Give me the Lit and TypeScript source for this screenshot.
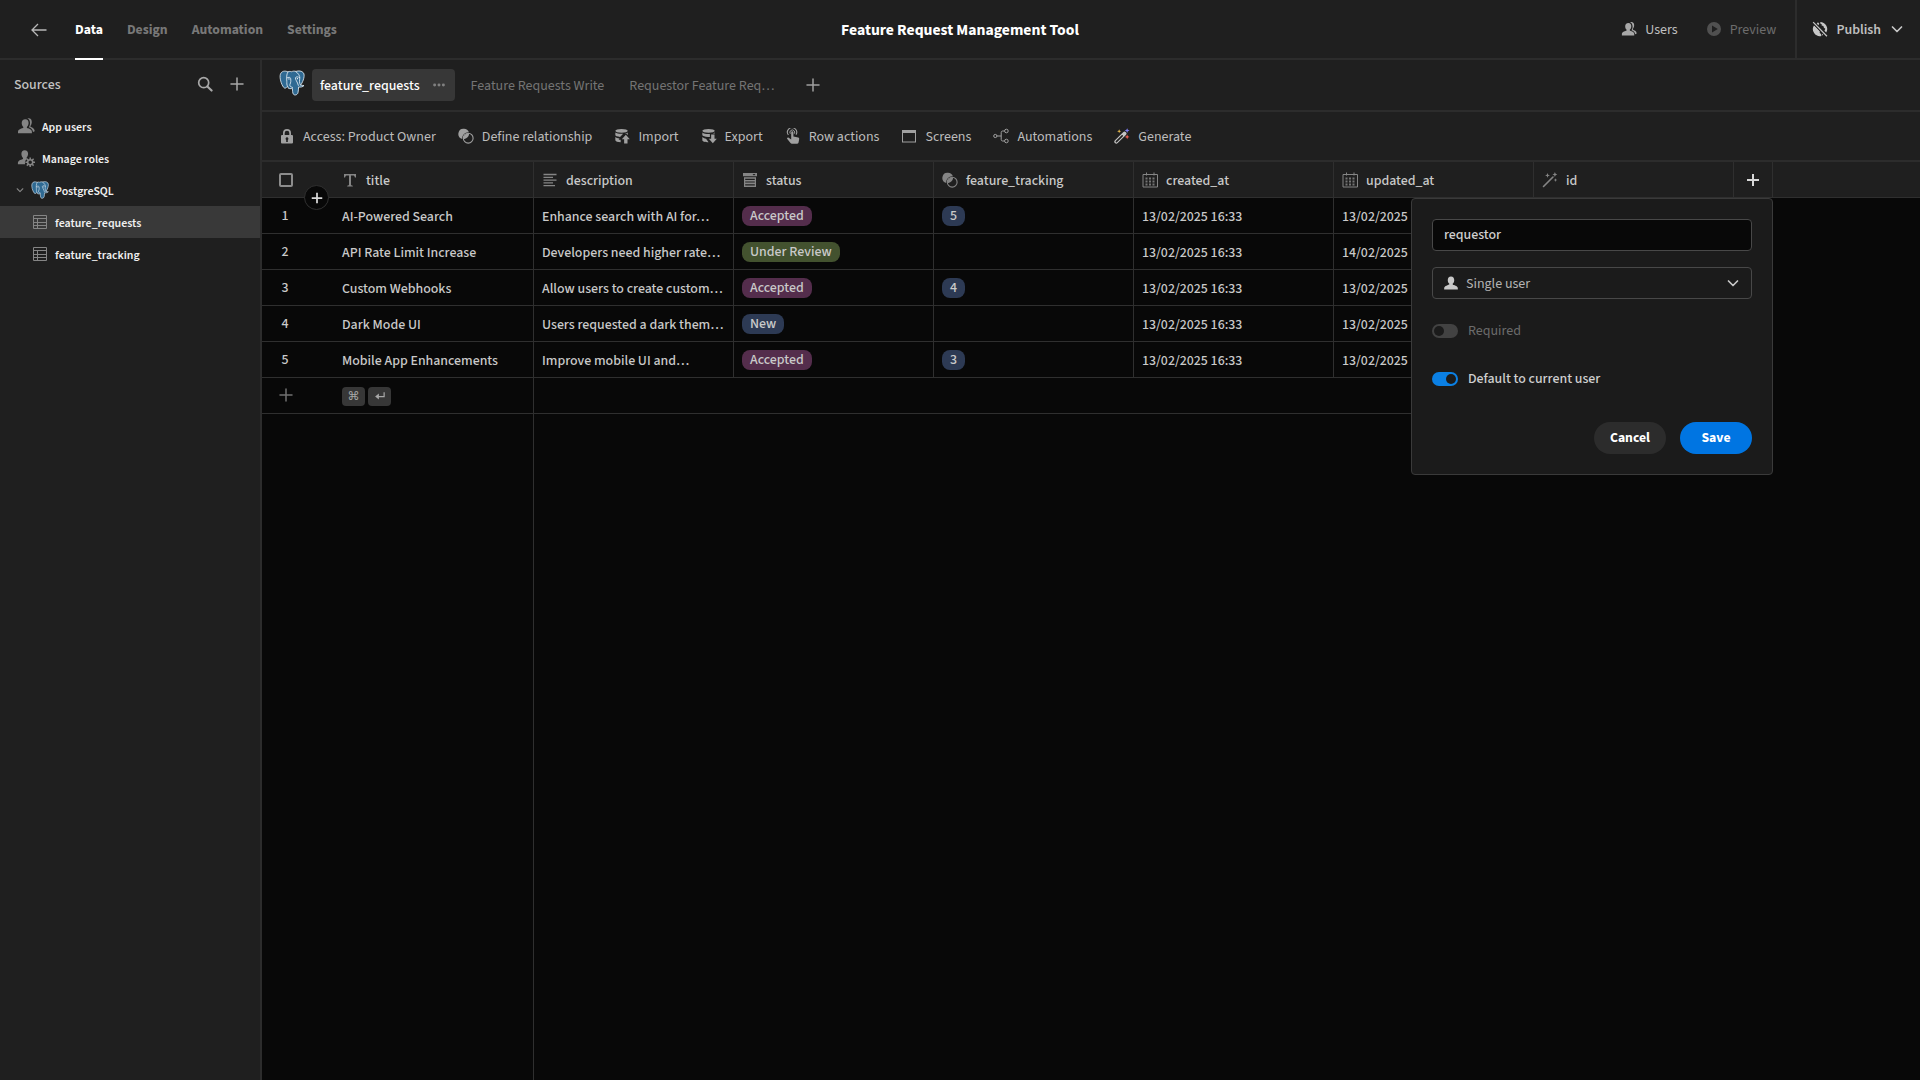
import { LitElement, html, css, svg, nothing, TemplateResult } from "lit";
import { customElement, property } from "lit/decorators.js";

type IconDef = { box: number; body: TemplateResult };

const ICONS: Record<string, IconDef> = {
  back: { box: 16, body: svg`<path d="M15.5 8H1M7 2 1 8l6 6" fill="none" stroke="currentColor" stroke-width="1.3"/>` },
  search: { box: 16, body: svg`<circle cx="6.7" cy="6.7" r="5" fill="none" stroke="currentColor" stroke-width="1.7"/><path d="m10.4 10.4 4.2 4.2" stroke="currentColor" stroke-width="2.1" stroke-linecap="round"/>` },
  plus: { box: 16, body: svg`<path d="M8 2v12M2 8h12" fill="none" stroke="currentColor" stroke-width="1.5" stroke-linecap="round"/>` },
  plusBold: { box: 16, body: svg`<path d="M8 2v12M2 8h12" fill="none" stroke="currentColor" stroke-width="2"/>` },
  chevron: { box: 16, body: svg`<path d="m3.5 6 4.5 4.500L12.500 6" fill="none" stroke="currentColor" stroke-width="1.7" stroke-linecap="round" stroke-linejoin="round"/>` },
  dots: { box: 16, body: svg`<circle cx="3" cy="8" r="1.7"/><circle cx="8" cy="8" r="1.7"/><circle cx="13" cy="8" r="1.7"/>` },
  users: {
    box: 18,
    body: svg`<path d="M8.300 2.200c2.300 0 3.300 1.600 3.300 3.800 0 1.500-.6 2.900-1.500 3.700-.3.300-.4.900.1 1.200.5.300 4.700 1 4.700 3.800v1.500H1v-1.500c0-2.800 4.500-3.500 5-3.800.5-.3.400-.9.100-1.200C5.200 8.900 4.700 7.500 4.700 6c0-2.200 1.300-3.800 3.600-3.800Z"/><path d="M10.300 1.300c3-.7 4.700 1 4.500 3.900-.1 1.600-.6 2.800-1.300 3.500-.3.400-.2.800.1 1.100.9.700 3.900 1 4.100 4.400l-1.700.7c-.3-2.900-2.700-4-4.200-4.600.8-1.300 1.300-2.700 1.200-4.500-.1-2-.9-3.700-2.700-4.500Z"/>`,
  },
  user: { box: 16, body: svg`<path d="M8 .7c2.500 0 3.700 1.700 3.700 4.100 0 1.600-.6 3-1.600 3.900-.3.300-.3.900.1 1.200.5.400 5.600 1 5.600 4v1.600H.2v-1.600c0-3 5.100-3.600 5.600-4 .4-.3.400-.9.100-1.200C4.900 7.800 4.300 6.400 4.300 4.800 4.300 2.400 5.500.7 8 .7Z"/>` },
  roles: {
    box: 18,
    body: svg`<path d="M7.700 1.200c2.300 0 3.400 1.500 3.400 3.600 0 1.500-.6 2.800-1.400 3.600-.3.300-.3.900.1 1.200l.5.200a5 5 0 0 0-2.200 5.400H.9v-1.400c0-2.700 4.400-3.400 4.900-3.900.4-.4.300-.9 0-1.200C5 7.900 4.400 6.400 4.400 4.800c0-2.100 1.100-3.600 3.300-3.600Z"/><circle cx="13.200" cy="13.200" r="2.500" fill="none" stroke="currentColor" stroke-width="1.500"/><path d="M13.200 8.400v2M13.200 16v2M8.400 13.200h2M16 13.200h2M9.800 9.800l1.400 1.400M15.200 15.200l1.400 1.400M9.800 16.600l1.400-1.400M15.200 11.200l1.400-1.400" stroke="currentColor" stroke-width="1.500"/>`,
  },
  table: { box: 16, body: svg`<path d="M1.500 1.500h13v13h-13zM1.500 4.500h13M1.500 8.500h13M1.500 11.500h13M5.500 4.500v10" fill="none" stroke="currentColor" stroke-width="1"/>` },
  postgres: {
    box: 24,
    body: svg`<path d="M8.200 1.700C5.700.6 2.300.7 1.300 3.900c-1 3.300.8 9.300 2.900 12 1.200 1.500 2.300.8 3.500-.7l.9.500c-.7.900-.2 1.200 1.300 1.500 1 .2 1.900 0 2.500-.3.100 2.200.1 4.200.8 5.300.9 1.500 3.700 1 4.300-1.200.5-1.700.4-3.700.6-5.300 1.700.3 4.100-.1 5-1.400-1.500.1-2.400-.2-2.900-.7 2.300-3.400 4-8.800 2.300-11-1.500-1.900-4.400-2.100-6.800-1.300-1.500-.4-2.900-.3-4.200.3-1-.4-2.100-.4-3.300.1Z" fill="#2f6a93" stroke="#dfeaf2" stroke-width=".8"/><path d="M8.200 1.900C6.800 4 7 7 7.200 10.400c.1 1.800-.2 3.200.6 4.600M7.300 7.400c1.500-1.100 3.300-.9 3.500.7.200 1.700.2 3.300-.7 5.200-.4 1.300.2 2.100 2.300 2.800M15.700 1.700c2.400 1.300 3.600 4.100 3.500 5.500-.2 2.700-.9 4.500.8 7M19.100 7c-1.600-1-3.600-.9-3.900.1-.5 1.700 1.900 3.600 2.700 7.100" fill="none" stroke="#dfeaf2" stroke-width=".8" stroke-linecap="round"/><circle cx="9.200" cy="8.200" r=".6" fill="#fff"/><circle cx="17" cy="8" r=".6" fill="#fff"/>`,
  },
  lock: { box: 16, body: svg`<path fill-rule="evenodd" d="M4 7V5a4 4 0 0 1 8 0v2h1.100c.5 0 .9.400.9.900v6.700c0 .5-.4.900-.9.900H2.900c-.5 0-.9-.4-.9-.9V7.900c0-.5.4-.9.900-.9H4Zm1.700 0h4.600V5a2.300 2.300 0 0 0-4.600 0v2ZM8 9.200a1.500 1.500 0 0 0-.8 2.700V14h1.600v-2.100A1.500 1.500 0 0 0 8 9.200Z"/>` },
  relation: {
    box: 16,
    body: svg`<path fill-rule="evenodd" d="M6 .7a5.200 5.200 0 0 1 4.900 3.500 6.200 6.200 0 0 0-6.700 6.700A5.200 5.200 0 0 1 6 .7Z"/><path d="M11.100 5.300c.1 3.100-2.500 5.800-5.700 5.800-.1-3.200 2.500-5.900 5.700-5.800Z"/><circle cx="10.200" cy="10.200" r="4.900" fill="none" stroke="currentColor" stroke-width="1.100"/>`,
  },
  importData: {
    box: 18,
    body: svg`<path d="M8.500 1C4.400 1 1.500 1.900 1.500 3.200S4.400 5.400 8.500 5.400s7-.9 7-2.200S12.600 1 8.500 1ZM1.500 5v3c0 1 2.200 1.900 5.300 2.100l3.500-3.600C6.500 6.800 3 6.300 1.500 5Zm14 0c-1 .9-2.600 1.200-3.900 1.400l2-.1 1.900 1.700V5ZM1.500 10v3.700c0 1.300 3 2.100 6 2.200v-2.700H5.200l1-1.500C4 11.500 2.400 11 1.500 10Z"/><path d="m13.300 7.600 4.500 5h-2.600v4.700h-3.800v-4.700H8.800Z"/>`,
  },
  exportData: {
    box: 18,
    body: svg`<path d="M8.500 1C4.400 1 1.500 1.900 1.500 3.200S4.400 5.400 8.500 5.400s7-.9 7-2.200S12.600 1 8.500 1ZM1.500 5v3c0 1.100 3 2 6.500 2.100h2V6.800C6.500 7 3 6.300 1.500 5Zm14 0c-.7.600-1.500.9-2.300 1.100h2.300V5ZM1.500 10v3.700c0 1.300 3.300 2.200 7 2.200L5.700 12C3.800 11.600 2.300 11 1.500 10Z"/><path d="M11.400 7.400h3.800v4.700h2.600l-4.500 5-4.500-5h2.600Z"/>`,
  },
  touch: {
    box: 16,
    body: svg`<path d="M3.400 7A4.600 4.600 0 1 1 11 6.600" fill="none" stroke="currentColor" stroke-width="1.100"/><path d="M5.300 5.700a2.400 2.400 0 1 1 4 0" fill="none" stroke="currentColor" stroke-width="1"/><path d="M6.200 4.300c0-1.500 2.200-1.500 2.200 0v4.300l4.800 1c.8.200 1.100.8 1 1.500l-.6 3.200c-.1.800-.6 1.400-1.400 1.400H6.900c-.6 0-1-.2-1.400-.7L2.300 11c-.8-1.100.5-2 1.400-1.300l2.500 1.700V4.300Z"/>`,
  },
  screen: { box: 16, body: svg`<path fill-rule="evenodd" d="M1 2h14v12.500H1V2Zm1 3v8.500h12V5H2Z"/>` },
  flow: {
    box: 16,
    body: svg`<g fill="none" stroke="currentColor" stroke-width="1"><circle cx="2.300" cy="8" r="1.600"/><circle cx="13.400" cy="3" r="1.800"/><circle cx="13.400" cy="13" r="1.800"/><path d="M3.900 8h4.300M11.600 3H9.700c-1 0-1.500.5-1.500 1.500v7c0 1 .5 1.500 1.500 1.500h1.900"/></g>`,
  },
  generate: {
    box: 18,
    body: svg`<path d="m2.600 15.400 9.200-9.200" stroke="#c4c4c4" stroke-width="4.400" stroke-linecap="round"/><path d="m2.700 15.300 6.500-6.500" stroke="#1f1f1f" stroke-width="1.800" stroke-linecap="round"/><path d="M5.800 1.300 6.400 3l1.700.6-1.700.6-.6 1.700-.6-1.700-1.700-.6L5.200 3Z" fill="#f5c451"/><path d="m14.800.2.8 1.900 1.900.8-1.900.8-.8 1.900-.8-1.900-1.900-.8 1.900-.8Z" fill="#7d7cf0"/><path d="m14.800 7.300.8 1.900 1.900.8-1.900.8-.8 1.900-.8-1.900-1.900-.8 1.900-.8Z" fill="#ee5d50"/>`,
  },
  wand: {
    box: 16,
    body: svg`<path d="m1.500 14.500 9.500-9.500" stroke="currentColor" stroke-width="1.600" stroke-linecap="round"/><path d="m12.900 0 .7 1.800 1.700.7-1.700.7-.7 1.700-.7-1.700-1.700-.7 1.700-.7ZM5.500 1l.7 1.700 1.700.7-1.700.7-.7 1.700-.7-1.700-1.700-.7 1.700-.7ZM13.500 6.300l.5 1.300 1.300.5-1.300.5-.5 1.300-.5-1.300-1.300-.5 1.300-.5Z"/>`,
  },
  text: { box: 16, body: svg`<path d="M2 2h12v3.600h-1.100c-.2-1.600-.7-2.200-2.300-2.200H9v9.100c0 .8.500 1.100 1.800 1.200v.8H5.200v-.8c1.300-.1 1.800-.4 1.800-1.200V3.400H5.400c-1.600 0-2.100.6-2.300 2.200H2Z"/>` },
  lines: { box: 16, body: svg`<path d="M1.500 2.500h13M1.500 5.300h9.500M1.500 8.100h13M1.500 10.900h9.500M1.500 13.700h11.500" stroke="currentColor" stroke-width="1.300"/>` },
  options: { box: 16, body: svg`<path fill-rule="evenodd" d="M1 1h14v3.300H1V1Zm9.500 1.100 1.500 1.500 1.500-1.500h-3ZM2 5.300h12V15H2V5.300Zm1.200 1.400v1.200h9.600V6.700H3.200Zm0 2.700v1.200h9.600V9.400H3.200Zm0 2.800v1.200h9.600v-1.200H3.200Z"/>` },
  calendar: {
    box: 16,
    body: svg`<path d="M1 2.500h14.500v12.500H1ZM4.500 .5v3M12 .5v3" fill="none" stroke="currentColor" stroke-width="1"/><path d="M3.500 5.500h2v2h-2zM7 5.500h2v2H7zM10.500 5.500h2v2h-2zM3.500 8.500h2v2h-2zM7 8.500h2v2H7zM10.500 8.500h2v2h-2zM3.500 11.500h2v2h-2zM7 11.500h2v2H7zM10.500 11.500h2v2h-2z" opacity=".85"/>`,
  },
  play: { box: 16, body: svg`<path fill-rule="evenodd" d="M8 1a7 7 0 1 1 0 14A7 7 0 0 1 8 1ZM6 4.500v7L11.800 8 6 4.500Z"/>` },
  globeOff: {
    box: 18,
    body: svg`<path fill-rule="evenodd" d="M9 1a8 8 0 0 1 7 12l-2-2.100 1-2.200-1.600-1-.6-2.200-2-.4.200-1.500-1.700-.4.400-1L9 1ZM6.700 1.300 8.200 3 7 5.200 5 3.500ZM2.300 4.700 5.500 8l3.300 3.600-.1 1.800 1.500 1.200.4 2.300A8 8 0 0 1 2.300 4.700Zm9 9.200 1.600 1.700-1.400.8Z"/><path d="m1.300 1.300 15.500 15.900" stroke="#1f1f1f" stroke-width="3.400"/><path d="m1.300 1.300 15.500 15.900" stroke="currentColor" stroke-width="1.400"/>`,
  },
  enter: { box: 16, body: svg`<path d="M13.500 3v5.800H5" fill="none" stroke="currentColor" stroke-width="1.600"/><path d="M6.500 4.800v8L1.500 8.800Z"/>` },
};

@customElement("ui-icon")
export class UiIcon extends LitElement {
  @property() name = "";
  @property({ type: Number }) size = 16;
  static styles = css`
    :host { display: inline-flex; flex: none; }
    svg { display: block; fill: currentColor; }
  `;
  render() {
    const icon = ICONS[this.name];
    if (!icon) return nothing;
    return html`<svg aria-hidden="true" width=${this.size} height=${this.size} viewBox="0 0 ${icon.box} ${icon.box}">${icon.body}</svg>`;
  }
}

const TOOLS = [
  ["lock", "Access: Product Owner"],
  ["relation", "Define relationship"],
  ["importData", "Import"],
  ["exportData", "Export"],
  ["touch", "Row actions"],
  ["screen", "Screens"],
  ["flow", "Automations"],
  ["generate", "Generate"],
];

const COLUMNS = [
  ["text", "title"],
  ["lines", "description"],
  ["options", "status"],
  ["relation", "feature_tracking"],
  ["calendar", "created_at"],
  ["calendar", "updated_at"],
  ["wand", "id"],
];

interface Row {
  title: string;
  description: string;
  status: string;
  tracking?: number;
  created: string;
  updated: string;
}

const ROWS: Row[] = [
  { title: "AI-Powered Search", description: "Enhance search with AI for…", status: "Accepted", tracking: 5, created: "13/02/2025 16:33", updated: "13/02/2025 16:33" },
  { title: "API Rate Limit Increase", description: "Developers need higher rate…", status: "Under Review", created: "13/02/2025 16:33", updated: "14/02/2025 16:33" },
  { title: "Custom Webhooks", description: "Allow users to create custom…", status: "Accepted", tracking: 4, created: "13/02/2025 16:33", updated: "13/02/2025 16:33" },
  { title: "Dark Mode UI", description: "Users requested a dark them…", status: "New", created: "13/02/2025 16:33", updated: "13/02/2025 16:33" },
  { title: "Mobile App Enhancements", description: "Improve mobile UI and…", status: "Accepted", tracking: 3, created: "13/02/2025 16:33", updated: "13/02/2025 16:33" },
];

const TONES: Record<string, string> = { Accepted: "plum", "Under Review": "green", New: "blue" };

const shared = css`
  * { box-sizing: border-box; }
  button, input, select { font: inherit; font-size-adjust: inherit; color: inherit; }
  button { display: inline-flex; align-items: center; background: none; border: 0; padding: 0; cursor: pointer; white-space: nowrap; }
  a { color: inherit; text-decoration: none; }
  .text { padding-top: 2px; }
`;

@customElement("app-header")
export class AppHeader extends LitElement {
  static styles = [shared, css`
    :host { display: block; }
    .bar { display: grid; grid-template-columns: 1fr auto 1fr; height: 60px; border-bottom: 2px solid var(--line); background: var(--panel); }
    .nav { display: flex; align-items: stretch; gap: 24px; padding-left: 31px; font-weight: 700; color: #787878; }
    .nav a { display: flex; align-items: center; border-bottom: 2px solid transparent; border-top: 2px solid transparent; margin-bottom: -2px; }
    .nav .back { color: #b8b8b8; margin-right: 4px; }
    .nav .active { color: #fff; border-bottom-color: #fff; }
    .title { margin: 0; align-self: center; font-size: 16px; font-weight: 700; color: #fff; }
    .actions { display: flex; justify-content: flex-end; color: #c0c0c0; }
    .actions button { gap: 8px; }
    .users { margin-right: 28px; }
    .users ui-icon { color: #a8a8a8; }
    .preview { margin-right: 19px; color: #6c6c6c; }
    .preview ui-icon { color: #505050; }
    .publish { border-left: 2px solid var(--line); padding: 0 15px; font-weight: 600; }
    .publish ui-icon { color: #c6c6c6; }
  `];
  render() {
    return html`<header class="bar">
      <nav class="nav">
        <a class="back" href="#apps" aria-label="Back"><ui-icon name="back"></ui-icon></a>
        <a class="active" href="#data">Data</a>
        <a href="#design">Design</a>
        <a href="#automation">Automation</a>
        <a href="#settings">Settings</a>
      </nav>
      <h1 class="title text">Feature Request Management Tool</h1>
      <div class="actions">
        <button class="users"><ui-icon name="users"></ui-icon><span class="text">Users</span></button>
        <button class="preview"><ui-icon name="play"></ui-icon><span class="text">Preview</span></button>
        <button class="publish"><ui-icon name="globeOff"></ui-icon><span class="text">Publish</span><ui-icon name="chevron"></ui-icon></button>
      </div>
    </header>`;
  }
}

@customElement("source-list")
export class SourceList extends LitElement {
  static styles = [shared, css`
    :host { display: block; }
    .side { width: 262px; height: 100%; border-right: 2px solid var(--line); background: var(--panel); }
    .head { display: flex; align-items: center; gap: 16px; height: 50px; padding: 0 15px 2px 14px; color: #c4c4c4; }
    .head h2 { flex: 1; margin: 0; font-size: 14px; font-weight: 500; }
    .head button { color: #a8a8a8; }
    .list { list-style: none; margin: 0; padding: 0; font-size: 12px; font-weight: 600; color: #f0f0f0; }
    .item { display: flex; align-items: center; gap: 7px; height: 32px; padding-left: 17px; }
    .item ui-icon { color: #858585; }
    .item .text { padding-top: 3px; }
    .source { padding-left: 15px; gap: 6px; }
    .child { padding-left: 32px; }
    .selected { background: #393939; }
  `];
  render() {
    return html`<aside class="side">
      <div class="head">
        <h2 class="text">Sources</h2>
        <button aria-label="Search sources"><ui-icon name="search"></ui-icon></button>
        <button aria-label="Add source"><ui-icon name="plus"></ui-icon></button>
      </div>
      <ul class="list">
        <li><a class="item" href="#users"><ui-icon name="users" size="18"></ui-icon><span class="text">App users</span></a></li>
        <li><a class="item" href="#roles"><ui-icon name="roles" size="18"></ui-icon><span class="text">Manage roles</span></a></li>
        <li><a class="item source" href="#postgres"><ui-icon name="chevron" size="10"></ui-icon><ui-icon name="postgres" size="18"></ui-icon><span class="text">PostgreSQL</span></a></li>
        <li><a class="item child selected" href="#requests"><ui-icon name="table"></ui-icon><span class="text">feature_requests</span></a></li>
        <li><a class="item child" href="#tracking"><ui-icon name="table"></ui-icon><span class="text">feature_tracking</span></a></li>
      </ul>
    </aside>`;
  }
}

@customElement("column-form")
export class ColumnForm extends LitElement {
  static styles = [shared, css`
    :host { display: block; }
    .panel { display: flex; flex-direction: column; gap: 16px; padding: 20px; border: 1px solid #3a3a3a; border-radius: 4px; background: #1b1b1b; color: #d0d0d0; font-weight: 400; }
    .field { display: flex; align-items: center; gap: 8px; width: 320px; height: 32px; padding: 0 10px 0 11px; border: 1px solid #484848; border-radius: 4px; }
    .name { background: var(--ink); font-weight: 500; }
    .name:focus { outline: none; }
    .pick { color: #b4b4b4; }
    .pick ui-icon { color: #c8c8c8; }
    .pick select { flex: 1; min-width: 0; padding: 1px 0 0; appearance: none; border: 0; outline: 0; background: transparent; }
    .switch { display: flex; align-items: center; gap: 10px; height: 32px; font-weight: 500; }
    .switch input { appearance: none; display: flex; align-items: center; width: 26px; height: 14px; margin: 0; padding: 0 2px; border-radius: 7px; background: #424242; }
    .switch input::before { content: ""; width: 10px; height: 10px; border-radius: 5px; background: #1b1b1b; }
    .switch input:checked { justify-content: flex-end; background: #0b80e4; }
    .off { color: #6c6c6c; font-weight: 400; }
    .buttons { display: flex; justify-content: flex-end; gap: 14px; padding-top: 11px; }
    .buttons button { justify-content: center; min-width: 72px; height: 32px; padding: 0 16px; border-radius: 16px; background: #2c2c2c; color: #fff; font-weight: 700; }
    .buttons .save { background: #0075e2; }
  `];
  render() {
    return html`<div class="panel">
      <input class="field name" aria-label="Column name" value="requestor" />
      <div class="field pick">
        <ui-icon name="user" size="14"></ui-icon>
        <select aria-label="Column type"><option>Single user</option></select>
        <ui-icon name="chevron"></ui-icon>
      </div>
      <label class="switch off"><input type="checkbox" disabled />Required</label>
      <label class="switch"><input type="checkbox" checked />Default to current user</label>
      <div class="buttons">
        <button>Cancel</button>
        <button class="save">Save</button>
      </div>
    </div>`;
  }
}

@customElement("data-grid")
export class DataGrid extends LitElement {
  static styles = [shared, css`
    :host { display: flex; flex-direction: column; flex: 1; background: var(--ink); }
    table { width: 100%; table-layout: fixed; border-collapse: separate; border-spacing: 0; color: #cacaca; font-weight: 500; }
    .gutter { width: 72px; }
    .wide { width: 200px; }
    .narrow { width: 39px; }
    th, td { height: 36px; padding: 0 8px; text-align: left; white-space: nowrap; border-bottom: 1px solid var(--rule); border-right: 1px solid var(--rule); }
    td { padding-top: 1px; }
    th { position: relative; background: var(--panel); font-weight: 500; }
    th.plain, td.plain { border-right: 0; }
    td.blank { border: 0; }
    .label { display: flex; align-items: center; gap: 8px; }
    .label ui-icon { color: #858585; }
    .tick { display: block; appearance: none; width: 14px; height: 14px; margin: 0 0 0 9px; border: 2px solid #8c8c8c; border-radius: 2px; }
    .num { padding: 0 26px 0 0; text-align: center; }
    .insert { position: absolute; z-index: 2; right: 5px; bottom: -13px; justify-content: center; width: 25px; height: 25px; border: 1px solid #303030; border-radius: 13px; background: var(--ink); color: #d8d8d8; }
    .add { display: flex; justify-content: center; width: 100%; color: #d8d8d8; }
    .popover { position: absolute; z-index: 3; top: 36px; right: -1px; }
    .pill { display: inline-flex; align-items: center; height: 20px; padding: 0 8px; border-radius: 8px; vertical-align: middle; }
    .plum { background: #542d4c; }
    .green { background: #43522f; }
    .blue { background: #2d3a54; }
    .new { color: #707070; padding: 0 0 1px 16px; }
    .new ui-icon { display: flex; }
    .keys { display: flex; gap: 3px; }
    kbd { display: flex; align-items: center; justify-content: center; width: 23px; height: 19px; border-radius: 4px; background: #373737; color: #a8a8a8; font-family: "DejaVu Sans", sans-serif; font-size: 12px; font-size-adjust: none; }
    .rest { flex: 1; width: 272px; border-right: 1px solid var(--rule); }
  `];
  render() {
    return html`<table>
        <colgroup>
          <col class="gutter" />${COLUMNS.map(() => html`<col class="wide" />`)}<col class="narrow" /><col />
        </colgroup>
        <thead>
          <tr>
            <th class="plain">
              <input class="tick" type="checkbox" aria-label="Select all rows" />
              <button class="insert" aria-label="Add row"><ui-icon name="plusBold" size="14"></ui-icon></button>
            </th>
            ${COLUMNS.map(([icon, label]) => html`<th><span class="label"><ui-icon name=${icon}></ui-icon><span class="text">${label}</span></span></th>`)}
            <th>
              <button class="add" aria-label="Add column"><ui-icon name="plusBold"></ui-icon></button>
              <column-form class="popover"></column-form>
            </th>
            <th class="plain"></th>
          </tr>
        </thead>
        <tbody>
          ${ROWS.map((row, i) => html`<tr>
            <td class="plain num">${i + 1}</td>
            <td class="text">${row.title}</td>
            <td class="text">${row.description}</td>
            <td><span class="pill ${TONES[row.status]}">${row.status}</span></td>
            <td>${row.tracking ? html`<span class="pill blue">${row.tracking}</span>` : nothing}</td>
            <td class="text">${row.created}</td>
            <td class="text">${row.updated}</td>
            <td></td>
            <td class="blank" colspan="2"></td>
          </tr>`)}
          <tr>
            <td class="plain new"><ui-icon name="plus"></ui-icon></td>
            <td><span class="keys"><kbd>⌘</kbd><kbd><ui-icon name="enter" size="12"></ui-icon></kbd></span></td>
            <td class="plain" colspan="6"></td>
            <td class="blank" colspan="2"></td>
          </tr>
        </tbody>
      </table>
      <div class="rest"></div>`;
  }
}

@customElement("app-root")
export class AppRoot extends LitElement {
  static styles = [shared, css`
    :host {
      --panel: #1f1f1f;
      --ink: #080808;
      --line: #2c2c2c;
      --rule: #2f2f2f;
      display: flex;
      flex-direction: column;
      min-height: 100vh;
      background: var(--ink);
      font-family: "Source Sans 3", "Source Sans Pro", "Noto Sans CJK SC", "Noto Sans", sans-serif;
      font-size: 14px;
      font-size-adjust: 0.486;
      line-height: 20px;
    }
    .body { display: flex; flex: 1; }
    .main { display: flex; flex-direction: column; flex: 1; min-width: 0; }
    .tabs { display: flex; align-items: center; height: 52px; padding: 0 17px; border-bottom: 2px solid var(--line); background: var(--panel); color: #747474; }
    .logo { margin-right: 7px; padding-bottom: 4px; }
    .tab { display: flex; align-items: center; gap: 12px; height: 32px; margin-right: 16px; padding: 0 9px 0 8px; border-radius: 4px; background: #373737; color: #fff; font-weight: 500; }
    .tab ui-icon { color: #808080; }
    .view { margin-right: 25px; }
    .view:last-of-type { margin-right: 30px; }
    .tabs button { color: #a0a0a0; }
    .tools { display: flex; align-items: center; gap: 22px; height: 50px; padding: 0 17px; border-bottom: 2px solid var(--line); background: var(--panel); color: #bcbcbc; }
    .tools button { gap: 8px; }
    .tools ui-icon { color: #a0a0a0; }
  `];
  render() {
    return html`<app-header></app-header>
      <div class="body">
        <source-list></source-list>
        <main class="main">
          <nav class="tabs">
            <ui-icon class="logo" name="postgres" size="26"></ui-icon>
            <a class="tab" href="#requests"><span class="text">feature_requests</span><ui-icon name="dots" size="14"></ui-icon></a>
            <a class="view text" href="#write">Feature Requests Write</a>
            <a class="view text" href="#requestor">Requestor Feature Req…</a>
            <button aria-label="Add view"><ui-icon name="plus"></ui-icon></button>
          </nav>
          <div class="tools">
            ${TOOLS.map(([icon, label]) => html`<button><ui-icon name=${icon}></ui-icon><span class="text">${label}</span></button>`)}
          </div>
          <data-grid></data-grid>
        </main>
      </div>`;
  }
}
